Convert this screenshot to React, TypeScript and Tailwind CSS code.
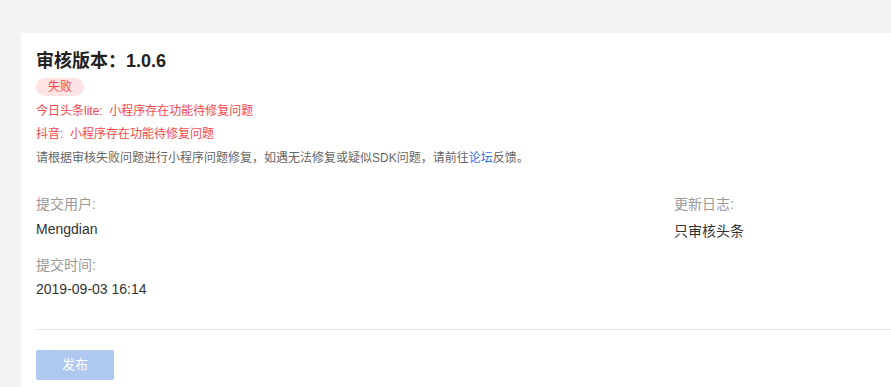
const FONT = "font-['Liberation_Sans','Noto_Sans_CJK_SC',sans-serif]";

function Field({ label, value, valueClass = "mt-[5px]" }: { label: string; value: string; valueClass?: string }) {
  return (
    <div>
      <div className="text-[14px] leading-[20px] text-[#999]">{label}</div>
      <div className={`text-[14px] leading-[20px] text-[#333] ${valueClass}`}>{value}</div>
    </div>
  );
}

export default function App() {
  return (
    <div className={`min-h-[387px] w-[891px] overflow-hidden bg-[#f2f3f5] pl-[21px] pt-[33px] ${FONT}`}>
      <div className="min-h-[354px] bg-white pl-[15px] pt-[16px]">
        {/* header */}
        <h1 className="text-[18px] font-bold leading-[24px] text-[#222]">审核版本：1.0.6</h1>
        <span className="mt-[5px] flex h-[18px] w-[48px] items-center justify-center rounded-full bg-[#fde3e3] text-[12px] leading-none text-[#f5484d]">
          失败
        </span>
        <div className="mt-[4px] text-[12px] leading-[23px] text-[#f5484d]">今日头条lite:&nbsp; 小程序存在功能待修复问题</div>
        <div className="text-[12px] leading-[23px] text-[#f5484d]">抖音:&nbsp; 小程序存在功能待修复问题</div>
        <div className="text-[12px] leading-[24px] text-[#666]">
          请根据审核失败问题进行小程序问题修复，如遇无法修复或疑似SDK问题，请前往<span className="text-[#2f6fe8]">论坛</span>反馈。
        </div>

        {/* details */}
        <div className="mt-[24px] flex">
          <div className="flex-1">
            <Field label="提交用户:" value="Mengdian" />
            <div className="mt-[16px]">
              <Field label="提交时间:" value="2019-09-03 16:14" valueClass="mt-[4px]" />
            </div>
          </div>
          <div className="w-[217px]">
            <Field label="更新日志:" value="只审核头条" valueClass="mt-[7px]" />
          </div>
        </div>

        <div className="mt-[30px] h-px bg-[#e8e8e8]" />

        <button className="mt-[20px] h-[30px] w-[78px] rounded-[2px] bg-[#aec8f0] text-[13px] text-white">发布</button>
      </div>
    </div>
  );
}
